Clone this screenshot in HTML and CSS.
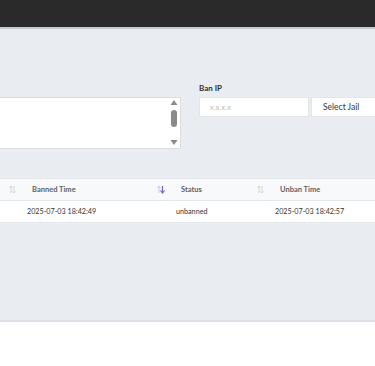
FILE: index.html
```html
<!DOCTYPE html>
<html lang="en">
<head>
    <meta charset="UTF-8">
    <meta name="viewport" content="width=device-width, initial-scale=1.0">
    <title>Banned IPs</title>
    <link rel="stylesheet" href="styles.css">
</head>
<body>
    <header class="topbar"></header>

    <main class="content">
        <section class="tools">
            <div class="log-box">
                <div class="log-text"></div>
                <div class="scroll">
                    <svg width="8" height="52" viewBox="0 0 8 52">
                        <path d="M4 3 L7.5 8 L0.5 8 Z" fill="#8a8a8a"/>
                        <rect x="1" y="13" width="6" height="17" rx="3" fill="#8a8a8a"/>
                        <path d="M0.5 43 L7.5 43 L4 48 Z" fill="#8a8a8a"/>
                    </svg>
                </div>
            </div>

            <label class="ban-label" for="banIp">Ban IP</label>
            <div class="ban-fields">
                <input type="text" id="banIp" placeholder="x.x.x.x">
                <div class="jail-select">Select Jail</div>
            </div>
        </section>

        <div class="table-wrap">
            <table class="bans">
                <thead>
                    <tr>
                        <th class="col-ip"><span class="sort"><svg width="7" height="9" viewBox="0 0 7 9"><path d="M2 1 V8 M0.5 2.5 L2 1 L3.5 2.5 M5 1 V8 M3.5 6.5 L5 8 L6.5 6.5" stroke="#cfd2d6" stroke-width="1" fill="none"/></svg></span></th>
                        <th class="col-banned">Banned Time<span class="sort"><svg width="8" height="9" viewBox="0 0 8 9"><path d="M2 1 V8 M0.5 2.5 L2 1 L3.5 2.5" stroke="#c6c8d6" stroke-width="1" fill="none"/><path d="M5.5 1 V8 M3.5 5.5 L5.5 8 L7.5 5.5" stroke="#6b68c9" stroke-width="1.2" fill="none"/></svg></span></th>
                        <th class="col-status">Status<span class="sort"><svg width="7" height="9" viewBox="0 0 7 9"><path d="M2 1 V8 M0.5 2.5 L2 1 L3.5 2.5 M5 1 V8 M3.5 6.5 L5 8 L6.5 6.5" stroke="#cfd2d6" stroke-width="1" fill="none"/></svg></span></th>
                        <th class="col-unban">Unban Time</th>
                    </tr>
                </thead>
                <tbody>
                    <tr>
                        <td class="col-ip"></td>
                        <td class="col-banned">2025-07-03 18:42:49</td>
                        <td class="col-status">unbanned</td>
                        <td class="col-unban">2025-07-03 18:42:57</td>
                    </tr>
                </tbody>
            </table>
        </div>
    </main>

    <footer class="page-foot"></footer>
</body>
</html>
```

FILE: styles.css
```css
body {
    margin: 0;
    font-family: Lato, "Open Sans", sans-serif;
    color: #333;
    background-color: #fff;
    overflow: hidden;
}

.topbar {
    height: 27px;
    background-color: #2a2a2a;
    border-bottom: 2px solid #c5c9ce;
}

.content {
    background-color: #e9edf2;
    height: 293px;
    padding-top: 54px;
    box-sizing: border-box;
    border-bottom: 2px solid #dde0e7;
    overflow: hidden;
}

.tools {
    display: grid;
    grid-template-columns: 191px 176px;
    grid-template-rows: 14px auto;
    column-gap: 18px;
    margin-left: -10px;
}

.log-box {
    grid-column: 1;
    grid-row: 2;
    display: flex;
    height: 52px;
    background-color: #fff;
    border: 1px solid #dadde2;
    box-sizing: border-box;
}

.log-text {
    flex: 1;
}

.scroll {
    width: 8px;
    margin-right: 2px;
}

.scroll svg {
    display: block;
    margin-top: -1px;
}

.ban-label {
    grid-column: 2;
    grid-row: 1;
    font-size: 8px;
    font-weight: bold;
    color: #2f2f2f;
}

.ban-fields {
    grid-column: 2;
    grid-row: 2;
    display: flex;
    gap: 2px;
    align-self: start;
    overflow: hidden;
}

.ban-fields input {
    flex: none;
    width: 110px;
    height: 20px;
    box-sizing: border-box;
    border: 1px solid #e2e5e9;
    padding: 0 10px;
    font-family: inherit;
    font-size: 7px;
    letter-spacing: 0.3px;
    outline: none;
}

.ban-fields input::placeholder {
    color: #b8b8b8;
}

.jail-select {
    flex: none;
    width: 120px;
    height: 20px;
    box-sizing: border-box;
    background-color: #fff;
    border: 1px solid #e2e5e9;
    padding-left: 11px;
    font-size: 8.5px;
    line-height: 18px;
    color: #333;
}

.table-wrap {
    margin-top: 29px;
    overflow: hidden;
}

.bans {
    margin-left: -60px;
    width: 520px;
    border-collapse: collapse;
    table-layout: fixed;
}

.bans th,
.bans td {
    height: 22px;
    padding: 0 5px;
    text-align: left;
    white-space: nowrap;
    box-sizing: border-box;
}

.bans th {
    position: relative;
    background-color: #f8f9fb;
    border-top: 1px solid #e4e7eb;
    border-bottom: 1px solid #e4e7eb;
    font-size: 7.5px;
    font-weight: bold;
    color: #5f5f5f;
    padding-left: 10px;
}

.bans td {
    background-color: #fff;
    border-bottom: 1px solid #e4e7eb;
    font-size: 7.2px;
    color: #333;
}

.sort {
    position: absolute;
    right: 6px;
    top: 6px;
}

.sort svg {
    display: block;
}

.col-ip {
    width: 82px;
}

.col-banned {
    width: 149px;
}

.col-status {
    width: 99px;
}

.page-foot {
    height: 46px;
    background-color: #fff;
}
```
